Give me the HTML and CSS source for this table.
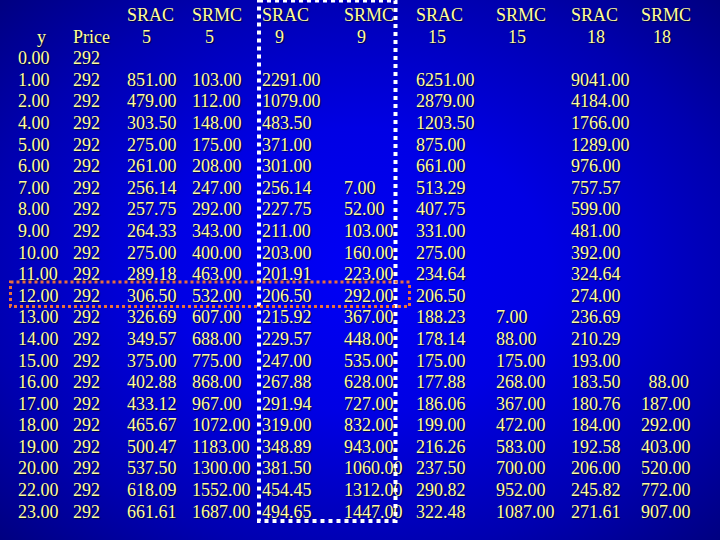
FILE: index.html
```html
<!DOCTYPE html>
<html>
<head>
<meta charset="utf-8">
<link rel="stylesheet" href="styles.css">
</head>
<body>
<div class="slide">
<table class="data">
<colgroup>
<col class="w55"><col class="w54"><col class="w65"><col class="w70"><col class="w82"><col class="w72"><col class="w80"><col class="w75"><col class="w70"><col class="w48">
</colgroup>
<tbody>
<tr><td></td><td></td><td>SRAC</td><td>SRMC</td><td>SRAC</td><td>SRMC</td><td>SRAC</td><td>SRMC</td><td>SRAC</td><td class="left">SRMC</td></tr>
<tr><td class="o19">y</td><td>Price</td><td class="o15">5</td><td class="o13">5</td><td class="o13">9</td><td class="o13">9</td><td class="o12">15</td><td class="o12">15</td><td class="o16">18</td><td class="left o12">18</td></tr>
<tr><td>0.00</td><td>292</td><td></td><td></td><td></td><td></td><td></td><td></td><td></td><td></td></tr>
<tr><td>1.00</td><td>292</td><td>851.00</td><td>103.00</td><td>2291.00</td><td></td><td>6251.00</td><td></td><td>9041.00</td><td></td></tr>
<tr><td>2.00</td><td>292</td><td>479.00</td><td>112.00</td><td>1079.00</td><td></td><td>2879.00</td><td></td><td>4184.00</td><td></td></tr>
<tr><td>4.00</td><td>292</td><td>303.50</td><td>148.00</td><td>483.50</td><td></td><td>1203.50</td><td></td><td>1766.00</td><td></td></tr>
<tr><td>5.00</td><td>292</td><td>275.00</td><td>175.00</td><td>371.00</td><td></td><td>875.00</td><td></td><td>1289.00</td><td></td></tr>
<tr><td>6.00</td><td>292</td><td>261.00</td><td>208.00</td><td>301.00</td><td></td><td>661.00</td><td></td><td>976.00</td><td></td></tr>
<tr><td>7.00</td><td>292</td><td>256.14</td><td>247.00</td><td>256.14</td><td>7.00</td><td>513.29</td><td></td><td>757.57</td><td></td></tr>
<tr><td>8.00</td><td>292</td><td>257.75</td><td>292.00</td><td>227.75</td><td>52.00</td><td>407.75</td><td></td><td>599.00</td><td></td></tr>
<tr><td>9.00</td><td>292</td><td>264.33</td><td>343.00</td><td>211.00</td><td>103.00</td><td>331.00</td><td></td><td>481.00</td><td></td></tr>
<tr><td>10.00</td><td>292</td><td>275.00</td><td>400.00</td><td>203.00</td><td>160.00</td><td>275.00</td><td></td><td>392.00</td><td></td></tr>
<tr><td>11.00</td><td>292</td><td>289.18</td><td>463.00</td><td>201.91</td><td>223.00</td><td>234.64</td><td></td><td>324.64</td><td></td></tr>
<tr><td>12.00</td><td>292</td><td>306.50</td><td>532.00</td><td>206.50</td><td>292.00</td><td>206.50</td><td></td><td>274.00</td><td></td></tr>
<tr><td>13.00</td><td>292</td><td>326.69</td><td>607.00</td><td>215.92</td><td>367.00</td><td>188.23</td><td>7.00</td><td>236.69</td><td></td></tr>
<tr><td>14.00</td><td>292</td><td>349.57</td><td>688.00</td><td>229.57</td><td>448.00</td><td>178.14</td><td>88.00</td><td>210.29</td><td></td></tr>
<tr><td>15.00</td><td>292</td><td>375.00</td><td>775.00</td><td>247.00</td><td>535.00</td><td>175.00</td><td>175.00</td><td>193.00</td><td></td></tr>
<tr><td>16.00</td><td>292</td><td>402.88</td><td>868.00</td><td>267.88</td><td>628.00</td><td>177.88</td><td>268.00</td><td>183.50</td><td>88.00</td></tr>
<tr><td>17.00</td><td>292</td><td>433.12</td><td>967.00</td><td>291.94</td><td>727.00</td><td>186.06</td><td>367.00</td><td>180.76</td><td>187.00</td></tr>
<tr><td>18.00</td><td>292</td><td>465.67</td><td>1072.00</td><td>319.00</td><td>832.00</td><td>199.00</td><td>472.00</td><td>184.00</td><td>292.00</td></tr>
<tr><td>19.00</td><td>292</td><td>500.47</td><td>1183.00</td><td>348.89</td><td>943.00</td><td>216.26</td><td>583.00</td><td>192.58</td><td>403.00</td></tr>
<tr><td>20.00</td><td>292</td><td>537.50</td><td>1300.00</td><td>381.50</td><td>1060.00</td><td>237.50</td><td>700.00</td><td>206.00</td><td>520.00</td></tr>
<tr><td>22.00</td><td>292</td><td>618.09</td><td>1552.00</td><td>454.45</td><td>1312.00</td><td>290.82</td><td>952.00</td><td>245.82</td><td>772.00</td></tr>
<tr><td>23.00</td><td>292</td><td>661.61</td><td>1687.00</td><td>494.65</td><td>1447.00</td><td>322.48</td><td>1087.00</td><td>271.61</td><td>907.00</td></tr>
</tbody>
</table>
<svg class="marks" width="720" height="540" viewBox="0 0 720 540" aria-hidden="true">
  <rect x="259" y="0.5" width="136.5" height="520.5" fill="none" stroke="#ffffff" stroke-width="4" stroke-dasharray="4 4"/>
  <rect x="10.5" y="282" width="399" height="24.5" fill="none" stroke="#e8703c" stroke-width="3" stroke-dasharray="3 3"/>
</svg>
</div>
</body>
</html>
```

FILE: styles.css
```css
html, body {
  margin: 0;
  padding: 0;
}

body {
  width: 720px;
  height: 540px;
  overflow: hidden;
  background: #000070;
}

.slide {
  position: relative;
  width: 720px;
  height: 540px;
  box-sizing: border-box;
  padding: 5px 0 0 18px;
  background: radial-gradient(ellipse 75% 75% at 50% 50%, #0000f6 0%, #0000e4 35%, #0000b0 70%, #000076 100%);
  font-family: "Liberation Serif", "Times New Roman", serif;
  font-size: 18px;
  color: #ffff99;
  text-shadow: 1px 1px 1px rgba(0, 0, 40, 0.8);
}

.data {
  border-collapse: collapse;
  border-spacing: 0;
  table-layout: fixed;
  width: 671px;
}

.data td {
  padding: 0;
  height: 21.6px;
  line-height: 21.6px;
  white-space: nowrap;
  text-align: left;
  vertical-align: top;
  overflow: visible;
}

.data td:last-child {
  text-align: right;
}

.data td.left {
  text-align: left;
}

.w55 { width: 55px; }
.w54 { width: 54px; }
.w65 { width: 65px; }
.w70 { width: 70px; }
.w82 { width: 82px; }
.w72 { width: 72px; }
.w80 { width: 80px; }
.w75 { width: 75px; }
.w48 { width: 48px; }

.o12 { padding-left: 12px !important; }
.o13 { padding-left: 13px !important; }
.o15 { padding-left: 15px !important; }
.o16 { padding-left: 16px !important; }
.o19 { padding-left: 19px !important; }

.marks {
  position: absolute;
  left: 0;
  top: 0;
  pointer-events: none;
}
```
